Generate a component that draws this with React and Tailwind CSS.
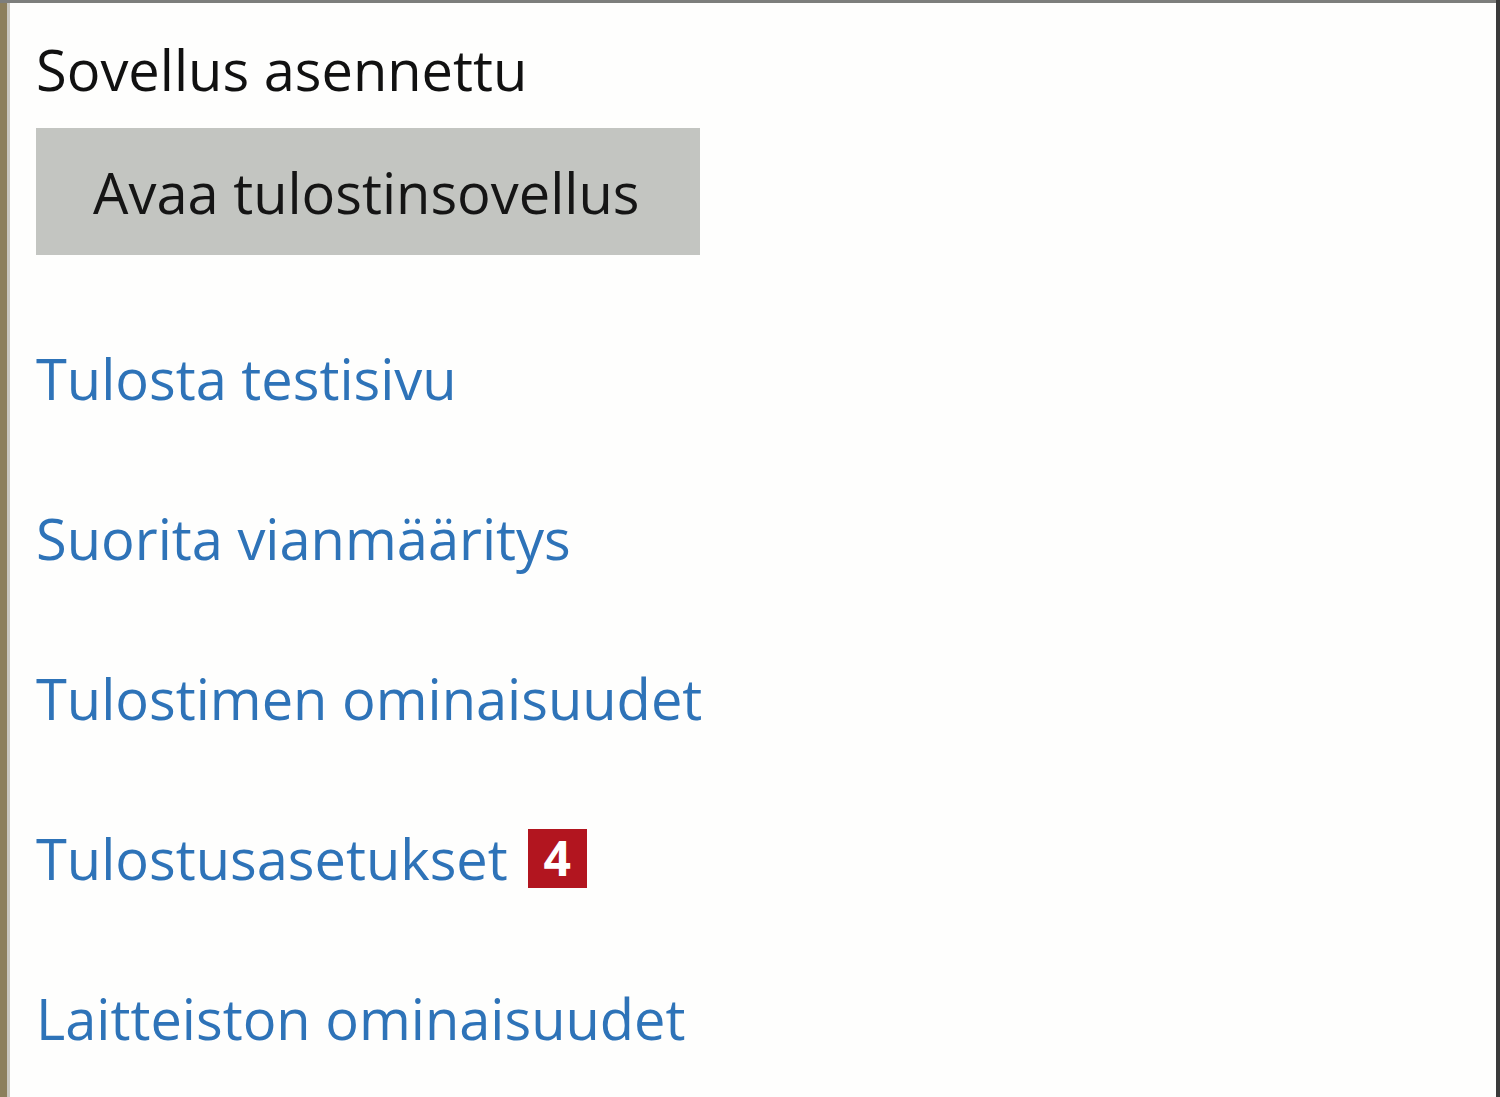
// Tulostimen hallinta — Windows 10 -tyylinen paneeli
export default function App() {
  const linkit = [
    { teksti: 'Tulosta testisivu' },
    { teksti: 'Suorita vianmääritys' },
    { teksti: 'Tulostimen ominaisuudet' },
    { teksti: 'Tulostusasetukset', merkki: '4' },
    { teksti: 'Laitteiston ominaisuudet' },
  ];

  return (
    <div className="h-[1097px] w-full overflow-hidden bg-[#7d7e7c] pt-[3px] border-r-[4px] border-[#3a3a3a]">
      <div className="h-full border-l-[7px] border-[#8c7f5c] bg-[#fefefd]">
        <div
          className="h-full border-l-[3px] border-[#c9c7c0] pl-[26px] pt-[27px]"
          style={{ fontFamily: '"Open Sans", "Noto Sans", sans-serif' }}
        >
          <h2 className="h-[78px] flex items-center text-[56px] text-[#111] leading-none">
            Sovellus asennettu
          </h2>

          <button className="mt-[20px] w-[664px] h-[127px] bg-[#c3c5c1] text-left pl-[57px] text-[56px] text-[#151515] leading-none">
            Avaa tulostinsovellus
          </button>

          <div className="mt-[43px] flex flex-col">
            {linkit.map((l) => (
              <div key={l.teksti} className="h-[160px] flex items-center gap-[20px]">
                <span className="text-[56px] text-[#2e73b8] leading-none">{l.teksti}</span>
                {l.merkki && (
                  <span className="w-[59px] h-[59px] bg-[#b2151f] text-white font-bold text-[48px] leading-none flex items-center justify-center">
                    {l.merkki}
                  </span>
                )}
              </div>
            ))}
          </div>
        </div>
      </div>
    </div>
  );
}
